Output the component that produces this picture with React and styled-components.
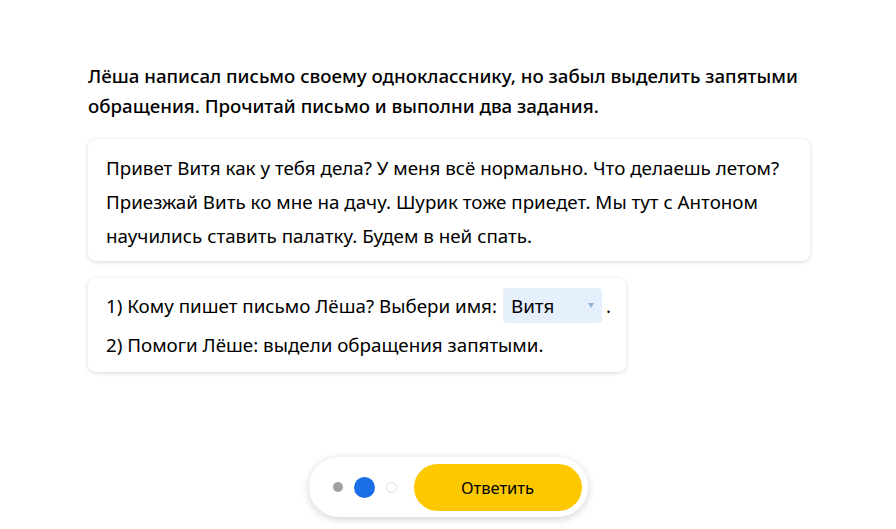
import React from "react";
import styled, { createGlobalStyle } from "styled-components";

const GlobalStyle = createGlobalStyle`
  body {
    margin: 0;
    background: #fff;
    font-family: "Noto Sans", "Open Sans", sans-serif;
    color: #000;
  }
`;

const Page = styled.div`
  display: flex;
  flex-direction: column;
  padding: 61px 0 0 88px;
  height: 529px;
  box-sizing: border-box;
`;

const Title = styled.h1`
  margin: 0;
  font-size: 18.7px;
  font-weight: 500;
  line-height: 30px;
  width: 740px;
`;

const Card = styled.div`
  box-sizing: border-box;
  width: ${(p) => p.width}px;
  margin-top: ${(p) => p.gap}px;
  padding: ${(p) => p.pad};
  background: #fff;
  border-radius: 8px;
  box-shadow: 0 1px 4px rgba(0, 0, 0, 0.16);
  font-size: 18.8px;
`;

const Letter = styled.p`
  margin: 0;
  line-height: 34px;
`;

const Task = styled.div`
  display: flex;
  align-items: center;
  min-height: 35px;
  line-height: 34px;
  white-space: nowrap;
  & + & {
    margin-top: 4px;
  }
`;

const Select = styled.div`
  display: flex;
  flex-shrink: 0;
  align-items: center;
  justify-content: space-between;
  box-sizing: border-box;
  width: 99px;
  height: 35px;
  margin: 0 4px 0 6px;
  padding: 0 8px 0 8px;
  background: #e5f0fc;
  border-radius: 4px;
`;

const Caret = styled.span`
  width: 0;
  height: 0;
  border-left: 3.5px solid transparent;
  border-right: 3.5px solid transparent;
  border-top: 5px solid #8fb2d8;
`;

const Footer = styled.div`
  margin-top: auto;
  margin-bottom: 12px;
  align-self: center;
  margin-left: -88px;
  display: flex;
  align-items: center;
  height: 60px;
  box-sizing: border-box;
  padding: 0 6px 0 24px;
  background: #fff;
  border-radius: 30px;
  box-shadow: 0 2px 8px rgba(0, 0, 0, 0.18);
`;

const Dots = styled.div`
  display: flex;
  align-items: center;
  gap: 11px;
  margin-right: 17px;
`;

const Dot = styled.span`
  box-sizing: border-box;
  width: ${(p) => p.size}px;
  height: ${(p) => p.size}px;
  border-radius: 50%;
  background: ${(p) => p.color};
  border: ${(p) => (p.ring ? "1px solid #dcdcdc" : "none")};
`;

const Button = styled.button`
  width: 168px;
  height: 47px;
  border: none;
  border-radius: 24px;
  background: #fdc800;
  font-family: inherit;
  font-size: 16.5px;
  color: #000;
  cursor: pointer;
`;

export default function App() {
  return (
    <>
      <GlobalStyle />
      <Page>
        <Title>
          Лёша написал письмо своему однокласснику, но забыл выделить запятыми
          обращения. Прочитай письмо и выполни два задания.
        </Title>
        <Card width={722} gap={18} pad="12px 18px 8px">
          <Letter>
            Привет Витя как у тебя дела? У меня всё нормально. Что делаешь
            летом? Приезжай Вить ко мне на дачу. Шурик тоже приедет. Мы тут с
            Антоном научились ставить палатку. Будем в ней спать.
          </Letter>
        </Card>
        <Card width={538} gap={17} pad="10px 18px 10px">
          <Task>
            1) Кому пишет письмо Лёша? Выбери имя:
            <Select>
              Витя
              <Caret />
            </Select>
            .
          </Task>
          <Task>2) Помоги Лёше: выдели обращения запятыми.</Task>
        </Card>
        <Footer>
          <Dots>
            <Dot size={10} color="#a0a0a0" />
            <Dot size={21} color="#1a6ee6" />
            <Dot size={11} color="#fff" ring />
          </Dots>
          <Button>Ответить</Button>
        </Footer>
      </Page>
    </>
  );
}
